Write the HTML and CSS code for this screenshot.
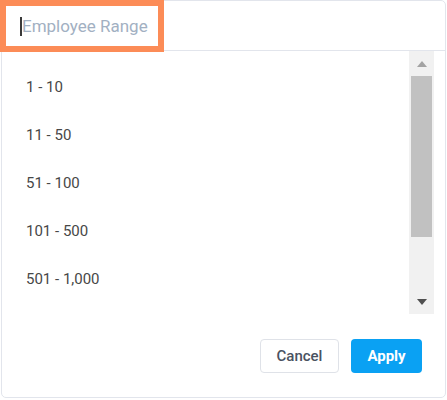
FILE: index.html
```html
<!DOCTYPE html>
<html>
<head>
<meta charset="utf-8">
<link rel="stylesheet" href="styles.css">
</head>
<body>
<div class="panel">
  <div class="header">
    <div class="search"><span class="caret"></span><span class="placeholder">Employee Range</span></div>
  </div>
  <div class="list-area">
    <ul class="options">
      <li>1 - 10</li>
      <li>11 - 50</li>
      <li>51 - 100</li>
      <li>101 - 500</li>
      <li>501 - 1,000</li>
    </ul>
    <div class="scrollbar">
      <div class="sb-btn"><span class="arrow-up"></span></div>
      <div class="sb-track"><div class="sb-thumb"></div></div>
      <div class="sb-btn"><span class="arrow-down"></span></div>
    </div>
  </div>
  <div class="footer">
    <button class="btn btn-cancel">Cancel</button>
    <button class="btn btn-apply">Apply</button>
  </div>
</div>
</body>
</html>
```
FILE: styles.css
```css
* { box-sizing: border-box; }
body {
  margin: 0;
  font-family: Roboto, "Liberation Sans", sans-serif;
  background: #fff;
}
.panel {
  margin-left: 1px;
  width: 445px;
  height: 398px;
  border: 1px solid #e2e5ec;
  border-radius: 5px;
  display: flex;
  flex-direction: column;
}
.header {
  height: 50px;
  border-bottom: 1px solid #e2e5ec;
  padding: 5px 0 0 4px;
}
.search {
  width: 152px;
  height: 40px;
  outline: 6px solid #fc8c57;
  display: flex;
  align-items: center;
  padding-left: 14px;
  background: #fff;
  white-space: nowrap;
  overflow: hidden;
}
.caret {
  flex: none;
  width: 1.5px;
  height: 19px;
  background: #3a3a3a;
  margin-right: 0.5px;
}
.placeholder {
  font-size: 17px;
  color: #a2b0c2;
}
.list-area {
  height: 263px;
  display: flex;
  padding-right: 11px;
}
.options {
  flex: 1;
  list-style: none;
  margin: 0;
  padding: 12px 0 0 24px;
  overflow: hidden;
}
.options li {
  height: 48px;
  line-height: 48px;
  font-size: 15px;
  color: #474747;
}
.scrollbar {
  width: 25px;
  background: #f1f1f1;
  display: flex;
  flex-direction: column;
}
.sb-btn {
  height: 25px;
  display: flex;
  align-items: center;
  justify-content: center;
}
.sb-track {
  flex: 1;
  padding: 0 2px;
}
.sb-thumb {
  height: 161px;
  background: #c1c1c1;
}
.arrow-up {
  width: 0;
  height: 0;
  border-left: 5.5px solid transparent;
  border-right: 5.5px solid transparent;
  border-bottom: 6px solid #a3a3a3;
}
.arrow-down {
  width: 0;
  height: 0;
  border-left: 5.5px solid transparent;
  border-right: 5.5px solid transparent;
  border-top: 6px solid #505050;
}
.footer {
  flex: 1;
  display: flex;
  justify-content: flex-end;
  align-items: flex-start;
  gap: 12px;
  padding: 25px 23px 0 0;
}
.btn {
  height: 34px;
  border-radius: 4px;
  font-family: Roboto, "Liberation Sans", sans-serif;
  font-size: 15px;
  cursor: pointer;
}
.btn-cancel {
  width: 79px;
  background: #fff;
  border: 1px solid #dfe2e8;
  color: #4a5261;
  font-weight: 500;
}
.btn-apply {
  width: 71px;
  background: #0aa1f3;
  border: none;
  color: #fff;
  font-weight: 700;
}
```
